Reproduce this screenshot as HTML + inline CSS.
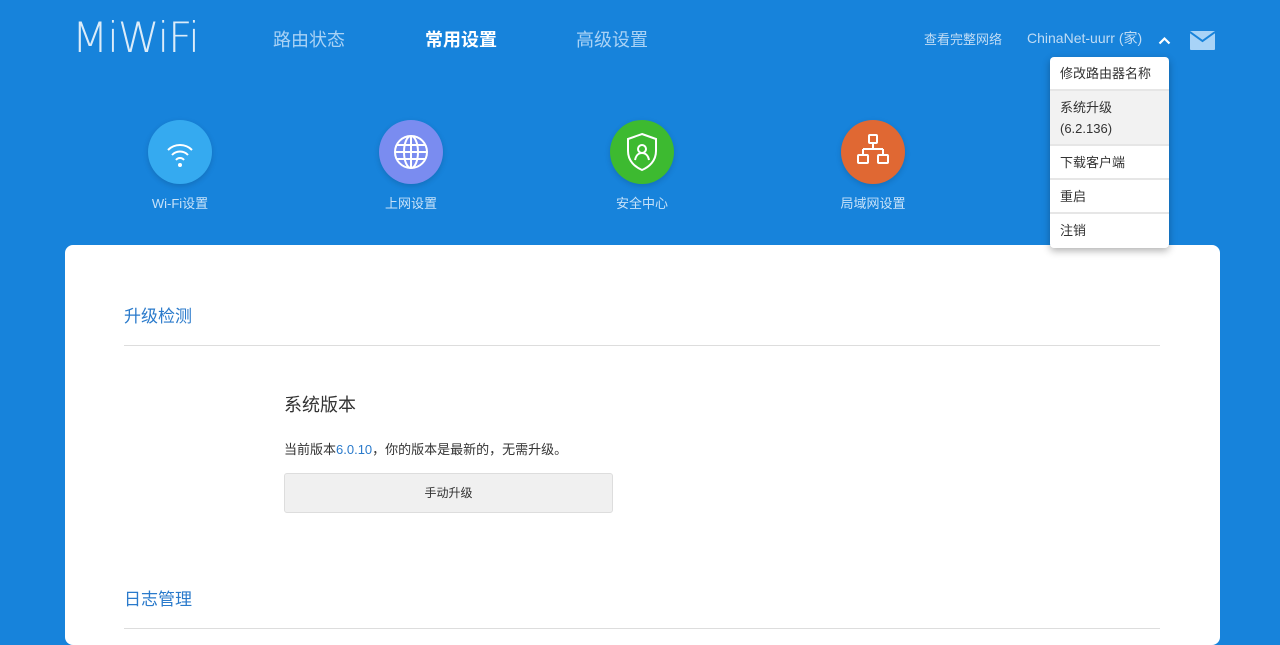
<!DOCTYPE html>
<html><head><meta charset="utf-8"><style>
*{margin:0;padding:0;box-sizing:border-box}
body{width:1280px;height:635px;overflow:hidden;background:#1783db;font-family:"Liberation Sans","Noto Sans CJK SC",sans-serif;position:relative}
.a{position:absolute}
.logo{left:72px;top:13px;color:#fff;font-size:42px;letter-spacing:-1px;font-family:"DejaVu Sans","Liberation Sans",sans-serif;opacity:.85;font-weight:200}
.nav{top:26px;font-size:18px;color:#a9d2f5}
.ic{width:64px;height:64px;border-radius:50%;top:120px;box-shadow:0 2px 6px rgba(0,0,0,.15)}
.lb{top:193px;font-size:13px;color:#c7e2f9;width:140px;text-align:center}
.card{left:65px;top:245px;width:1155px;height:400px;background:#fff;border-radius:8px}
.menu{left:1050px;top:57px;width:119px;background:#fff;border-radius:4px;box-shadow:0 3px 8px rgba(0,0,0,.3);font-size:13px;color:#333}
.menu div{padding:0 10px;border-bottom:2px solid #e6e6e6;height:34px;line-height:34px}
</style></head><body>
<div class="a logo">MiWiFi</div>
<div class="a nav" style="left:273px">路由状态</div>
<div class="a nav" style="left:425px;color:#fff;font-weight:bold">常用设置</div>
<div class="a nav" style="left:576px">高级设置</div>
<div class="a" style="left:924px;top:29px;font-size:13px;color:#c0dcf5">查看完整网络</div>
<div class="a" style="left:1027px;top:28px;font-size:14px;color:#c0dcf5">ChinaNet-uurr (家)</div>
<svg class="a" style="left:1158px;top:36px" width="13" height="9"><path d="M1.5 7.5L6.5 2.5L11.5 7.5" stroke="#fff" stroke-width="2.2" fill="none"/></svg>
<svg class="a" style="left:1190px;top:31px" width="25" height="19"><rect width="25" height="19" rx="1" fill="#a8d3f7"/><path d="M0 1L12.5 10L25 1" stroke="#1783db" stroke-width="2" fill="none"/></svg>

<div class="a ic" style="left:148px;background:#35aaf0"></div>
<svg class="a" style="left:148px;top:120px" width="64" height="64" fill="none" stroke="#fff" stroke-width="2"><path d="M20 30a17 17 0 0 1 24 0M24 35a11 11 0 0 1 16 0M28 40a5 5 0 0 1 8 0"/><circle cx="32" cy="45" r="1" fill="#fff"/></svg>
<div class="a ic" style="left:379px;background:#7a8cf0"></div>
<svg class="a" style="left:379px;top:120px" width="64" height="64" fill="none" stroke="#fff" stroke-width="2"><circle cx="32" cy="32" r="16"/><ellipse cx="32" cy="32" rx="7" ry="16"/><path d="M16 32h32M32 16v32M18 25h28M18 39h28"/></svg>
<div class="a ic" style="left:610px;background:#3dba30"></div>
<svg class="a" style="left:610px;top:120px" width="64" height="64" fill="none" stroke="#fff" stroke-width="2"><path d="M32 14l14 5v12c0 10-7 16-14 19c-7-3-14-9-14-19V19z"/><circle cx="32" cy="29" r="4"/><path d="M25 40c1-5 4-7 7-7s6 2 7 7"/></svg>
<div class="a ic" style="left:841px;background:#e06833"></div>
<svg class="a" style="left:841px;top:120px" width="64" height="64" fill="none" stroke="#fff" stroke-width="2"><rect x="28" y="15" width="8" height="8" rx="1"/><path d="M32 23v6M22 29h20M22 29v6M42 29v6"/><rect x="17" y="35" width="10" height="8" rx="1"/><rect x="37" y="35" width="10" height="8" rx="1"/></svg>
<div class="a lb" style="left:110px">Wi-Fi设置</div>
<div class="a lb" style="left:341px">上网设置</div>
<div class="a lb" style="left:572px">安全中心</div>
<div class="a lb" style="left:803px">局域网设置</div>

<div class="a card"></div>
<div class="a" style="left:124px;top:302px;font-size:17px;color:#2a7acb">升级检测</div>
<div class="a" style="left:124px;top:345px;width:1036px;height:1px;background:#ddd"></div>
<div class="a" style="left:284px;top:391px;font-size:18px;color:#333">系统版本</div>
<div class="a" style="left:284px;top:439px;font-size:13px;color:#333">当前版本<span style="color:#2a7acb">6.0.10</span>，你的版本是最新的，无需升级。</div>
<div class="a" style="left:284px;top:473px;width:329px;height:40px;background:#f0f0f0;border:1px solid #ddd;border-radius:3px;text-align:center;line-height:38px;font-size:12px;color:#333">手动升级</div>
<div class="a" style="left:124px;top:585px;font-size:17px;color:#2a7acb">日志管理</div>
<div class="a" style="left:124px;top:628px;width:1036px;height:1px;background:#ddd"></div>

<div class="a menu">
<div>修改路由器名称</div>
<div style="height:55px;line-height:21px;padding-top:6px;background:#f2f2f2">系统升级<br>(6.2.136)</div>
<div>下载客户端</div>
<div>重启</div>
<div style="border:0">注销</div>
</div>
</body></html>
